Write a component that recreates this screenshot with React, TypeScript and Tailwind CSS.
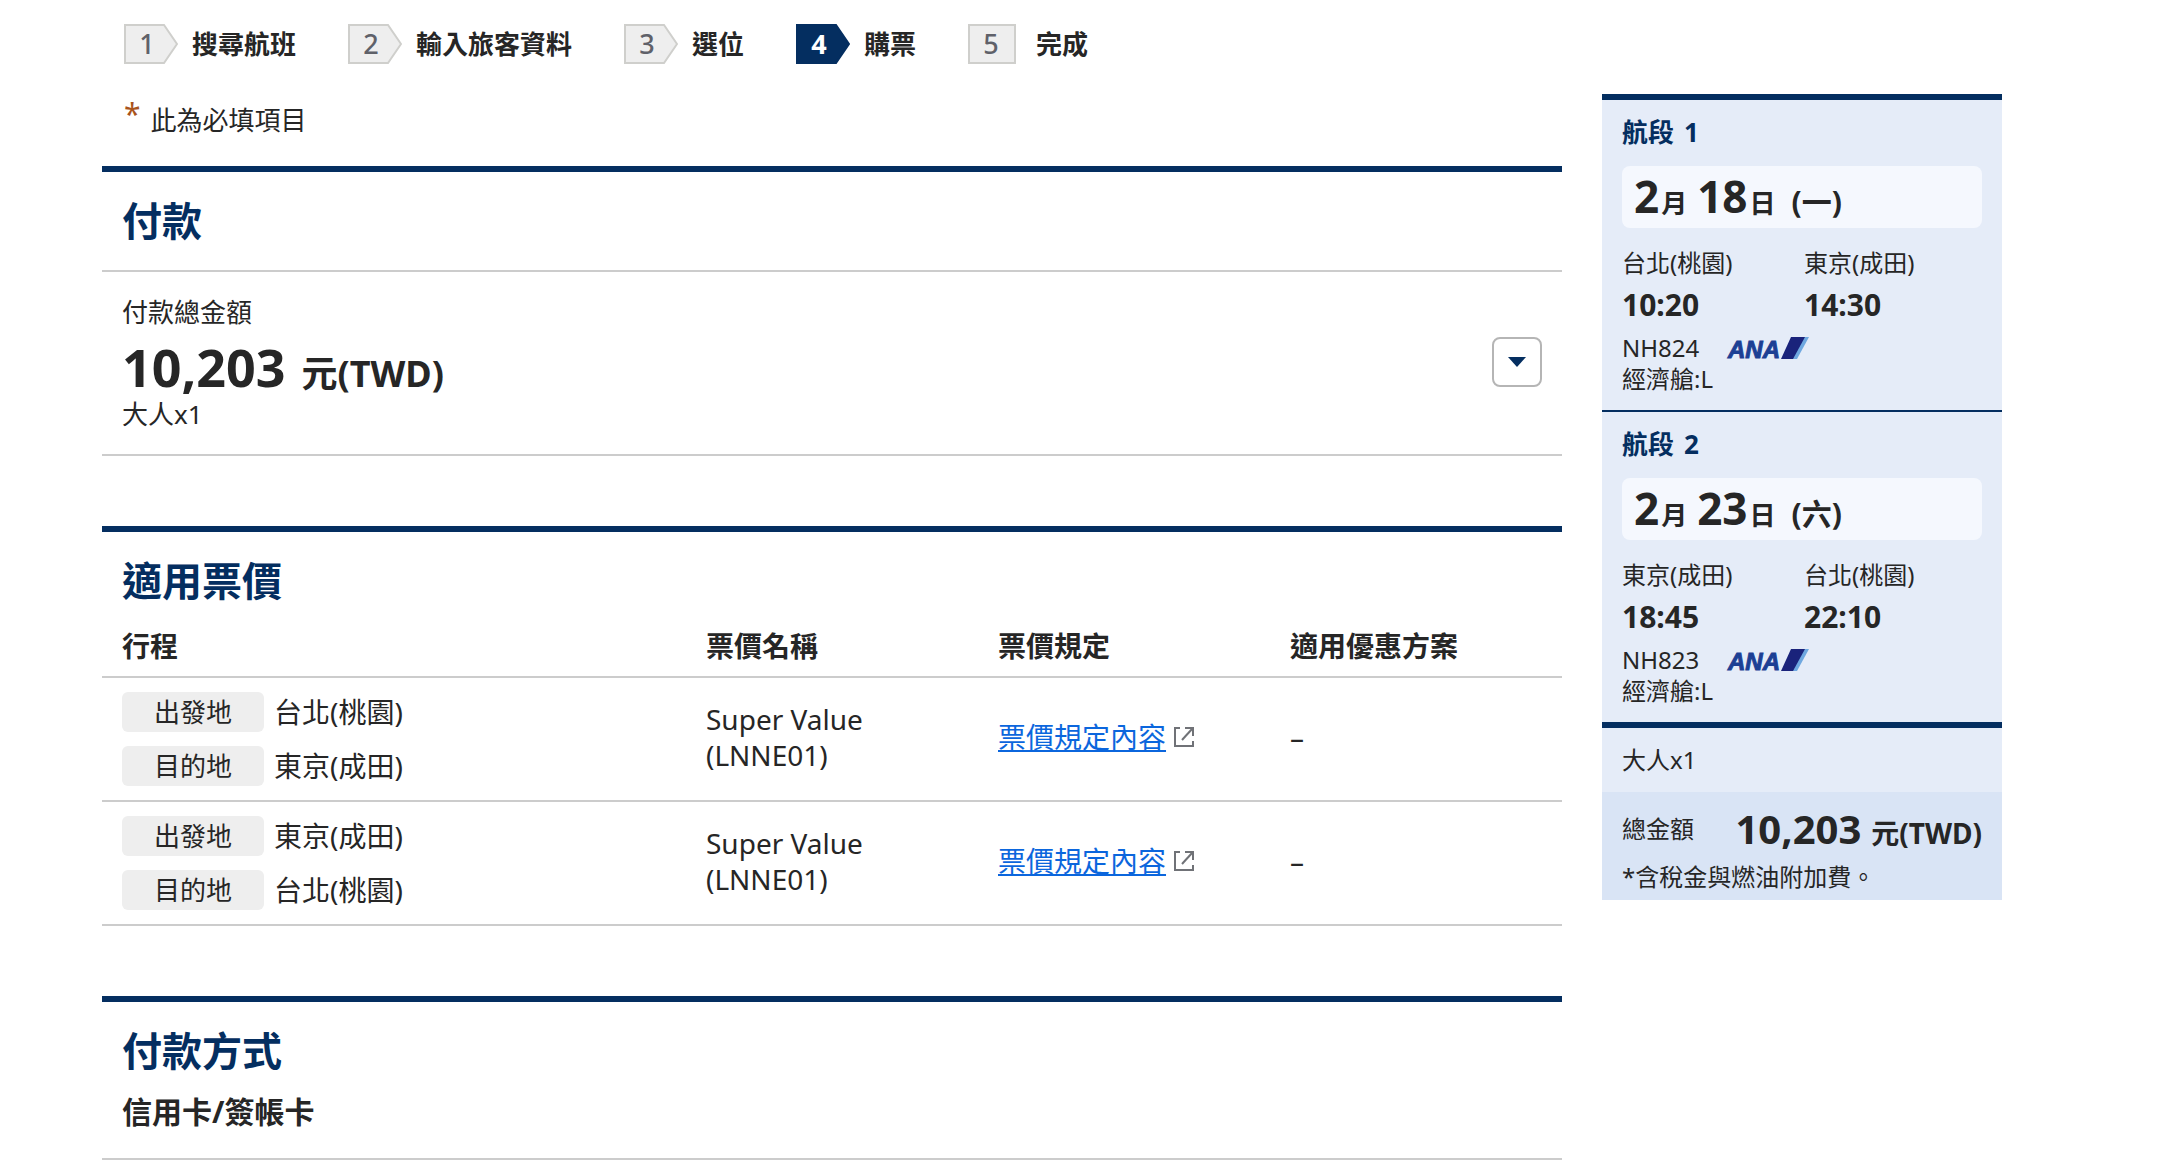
import { useState } from "react";

const steps = [
  { no: 1, label: "搜尋航班" },
  { no: 2, label: "輸入旅客資料" },
  { no: 3, label: "選位" },
  { no: 4, label: "購票" },
  { no: 5, label: "完成" },
];

const currentStep = 4;

const segments = [
  {
    no: 1,
    month: 2,
    day: 18,
    weekday: "一",
    from: "台北(桃園)",
    to: "東京(成田)",
    departs: "10:20",
    arrives: "14:30",
    flight: "NH824",
    cabin: "經濟艙:L",
  },
  {
    no: 2,
    month: 2,
    day: 23,
    weekday: "六",
    from: "東京(成田)",
    to: "台北(桃園)",
    departs: "18:45",
    arrives: "22:10",
    flight: "NH823",
    cabin: "經濟艙:L",
  },
];

function StepBadge({ no, last }: { no: number; last: boolean }) {
  const active = no === currentStep;

  return (
    <svg width="54" height="40" viewBox="0 0 54 40" className="shrink-0">
      <path
        d={last ? "M1 1H47V39H1Z" : "M1 1H40L53 20L40 39H1Z"}
        fill={active ? "#042e60" : "#eeeeee"}
        stroke={active ? "#042e60" : "#cfcfcc"}
        strokeWidth="2"
      />
      <text
        x="23"
        y="30"
        textAnchor="middle"
        fontSize="27"
        fontWeight={active ? 700 : 500}
        fill={active ? "#ffffff" : "#5f6169"}
      >
        {no}
      </text>
    </svg>
  );
}

function AnaLogo() {
  return (
    <svg
      width="82"
      height="22"
      viewBox="0 0 82 22"
      role="img"
      aria-label="ANA"
      className="shrink-0 overflow-visible"
    >
      <text
        x="1"
        y="21"
        fontSize="24"
        fontWeight="700"
        fontStyle="italic"
        fontFamily="Liberation Sans, sans-serif"
        fill="#1c3f94"
        stroke="#1c3f94"
        strokeWidth="1"
      >
        ANA
      </text>
      <path d="M68 0H82L70 22H56Z" fill="#6fa8e0" />
      <path d="M64 0H78L66 22H54Z" fill="#1a237b" />
    </svg>
  );
}

function ExternalIcon() {
  return (
    <svg
      width="20"
      height="20"
      viewBox="0 0 20 20"
      fill="none"
      stroke="#707277"
      strokeWidth="2"
      className="shrink-0"
    >
      <path d="M6 1H1V19H19V14" />
      <path d="M11 1H19V9" />
      <path d="M18 2L8 13" />
    </svg>
  );
}

function SectionTitle({ children }: any) {
  return (
    <h2 className="px-5 pt-6 text-[40px] leading-[50px] font-bold text-[#042e60]">
      {children}
    </h2>
  );
}

function PlaceRow({ label, place }: { label: string; place: string }) {
  return (
    <div className="flex items-center gap-2.5">
      <span className="w-[142px] rounded-md bg-[#eeeeee] text-center text-[26px] leading-10">
        {label}
      </span>
      <span className="text-[28px] leading-10">{place}</span>
    </div>
  );
}

function Segment({ segment }: any) {
  return (
    <section className="px-5 py-4">
      <h3 className="flex gap-2.5 text-[26px] leading-8 font-bold text-[#042e60]">
        <span>航段</span>
        <span>{segment.no}</span>
      </h3>

      {/* 日期 */}
      <div className="mt-[18px] flex h-[62px] items-baseline rounded-lg bg-[#f5f8fe] px-3 text-[26px] leading-[60px] font-bold">
        <span className="text-[44px]">{segment.month}</span>
        <span className="ml-0.5">月</span>
        <span className="ml-2.5 text-[44px]">{segment.day}</span>
        <span className="ml-0.5">日</span>
        <span className="ml-4 text-[30px]">({segment.weekday})</span>
      </div>

      {/* 出發 / 抵達 */}
      <div className="mt-4 grid grid-cols-2 gap-x-1 text-2xl leading-[38px]">
        <div>{segment.from}</div>
        <div>{segment.to}</div>
      </div>
      <div className="grid grid-cols-2 gap-x-1 text-[30px] leading-[46px] font-bold">
        <div>{segment.departs}</div>
        <div>{segment.arrives}</div>
      </div>

      <div className="mt-1 flex items-center gap-7 text-2xl leading-8">
        <span>{segment.flight}</span>
        <AnaLogo />
      </div>
      <div className="text-2xl leading-[30px]">{segment.cabin}</div>
    </section>
  );
}

export default function App() {
  const [open, setOpen] = useState(false);

  return (
    <div
      lang="zh-Hant"
      className="flex items-start gap-10 bg-white pt-6 pr-[182px] pl-[102px] font-['Noto_Sans','Noto_Sans_CJK_TC',sans-serif] text-[#262626]"
    >
      <main className="min-w-0 flex-1">
        {/* 購票步驟 */}
        <ol className="flex gap-[52px] pl-[22px] text-[26px] leading-10 font-bold">
          {steps.map((step) => (
            <li
              key={step.no}
              aria-current={step.no === currentStep ? "step" : undefined}
              className="flex items-center gap-3.5 whitespace-nowrap"
            >
              <StepBadge no={step.no} last={step.no === steps.length} />
              {step.label}
            </li>
          ))}
        </ol>

        <p className="mt-9 mb-[26px] flex items-start gap-2.5 pl-[22px] text-[26px] leading-10">
          <span className="text-[30px] leading-7 text-[#a9541c]">*</span>
          此為必填項目
        </p>

        {/* 付款 */}
        <section className="mb-[70px] border-t-6 border-b-2 border-t-[#042e60] border-b-[#cccccc]">
          <SectionTitle>付款</SectionTitle>
          <div className="mt-6 flex items-center justify-between border-t-2 border-[#cccccc] px-5 pt-[22px] pb-6">
            <div className="text-[26px]">
              <div className="leading-9">付款總金額</div>
              <div className="flex items-baseline gap-4 pt-[13px] leading-[48px] font-bold">
                <span className="text-[52px]">10,203</span>
                <span className="text-[36px]">元(TWD)</span>
              </div>
              <div className="leading-8">大人x1</div>
            </div>
            <button
              type="button"
              aria-label="顯示明細"
              aria-expanded={open}
              onClick={() => setOpen(!open)}
              className="flex size-[50px] items-center justify-center rounded-lg border-2 border-[#b5b5b5] bg-white"
            >
              <svg width="18" height="10" viewBox="0 0 18 10">
                <path d="M0 0H18L9 10Z" fill="#042e60" />
              </svg>
            </button>
          </div>
        </section>

        {/* 適用票價 */}
        <section className="mb-[70px] border-t-6 border-[#042e60]">
          <SectionTitle>適用票價</SectionTitle>
          <table className="w-full table-fixed text-left text-[28px]">
            <thead>
              <tr className="border-b-2 border-[#cccccc] leading-10">
                <th className="w-2/5 px-5 pt-5 pb-2.5">行程</th>
                <th className="w-1/5 px-5 pt-5 pb-2.5">票價名稱</th>
                <th className="w-1/5 px-5 pt-5 pb-2.5">票價規定</th>
                <th className="w-1/5 px-5 pt-5 pb-2.5">適用優惠方案</th>
              </tr>
            </thead>
            <tbody>
              {segments.map((segment) => (
                <tr key={segment.no} className="border-b-2 border-[#cccccc]">
                  <td className="px-5 py-3.5">
                    <div className="flex flex-col gap-3.5">
                      <PlaceRow label="出發地" place={segment.from} />
                      <PlaceRow label="目的地" place={segment.to} />
                    </div>
                  </td>
                  <td className="px-5 pb-1 leading-9">
                    Super Value
                    <br />
                    (LNNE01)
                  </td>
                  <td className="px-5 pb-1">
                    <a
                      href="#rules"
                      className="flex items-center gap-2 whitespace-nowrap text-[#0b66dd]"
                    >
                      <span className="underline decoration-2 underline-offset-2">
                        票價規定內容
                      </span>
                      <ExternalIcon />
                    </a>
                  </td>
                  <td className="px-5 pb-1">–</td>
                </tr>
              ))}
            </tbody>
          </table>
        </section>

        {/* 付款方式 */}
        <section className="border-t-6 border-b-2 border-t-[#042e60] border-b-[#cccccc]">
          <SectionTitle>付款方式</SectionTitle>
          <h3 className="px-5 pt-4 pb-[26px] text-[30px] leading-10 font-bold">
            信用卡/簽帳卡
          </h3>
        </section>
      </main>

      {/* 行程摘要 */}
      <aside className="mt-[70px] w-[400px] shrink-0 bg-[#e5ecf8]">
        <div className="divide-y-2 divide-[#042e60] border-y-6 border-[#042e60]">
          {segments.map((segment) => (
            <Segment key={segment.no} segment={segment} />
          ))}
        </div>
        <div className="px-5 text-2xl leading-[64px]">大人x1</div>
        <div className="bg-[#d9e4f5] px-5 pt-2 pb-1 text-2xl">
          <div className="flex h-[58px] items-start justify-between leading-[58px]">
            <span>總金額</span>
            <span className="flex items-baseline gap-2.5 font-bold">
              <span className="text-[40px]">10,203</span>
              <span className="text-[28px]">元(TWD)</span>
            </span>
          </div>
          <p className="leading-[38px]">*含稅金與燃油附加費。</p>
        </div>
      </aside>
    </div>
  );
}
